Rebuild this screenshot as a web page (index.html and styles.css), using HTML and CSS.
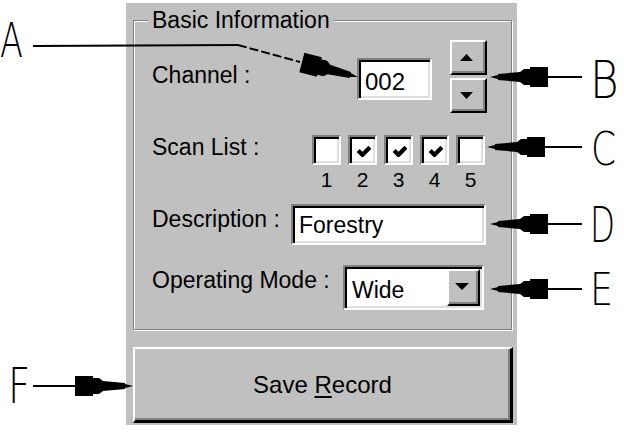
FILE: index.html
```html
<!DOCTYPE html>
<html lang="en">
<head>
    <meta charset="UTF-8">
    <title>Basic Information</title>
    <link rel="stylesheet" href="styles.css">
</head>
<body>
    <div class="page">
        <div class="dialog">
            <fieldset class="group">
                <legend>Basic Information</legend>

                <div class="row row-channel">
                    <span class="label label-channel">Channel :</span>
                    <div class="sunken field field-channel">002</div>
                    <div class="spin">
                        <div class="raised spin-btn">
                            <svg width="13" height="7" viewBox="0 0 13 7"><polygon points="0,7 6.5,0 13,7"/></svg>
                        </div>
                        <div class="raised spin-btn">
                            <svg width="13" height="7" viewBox="0 0 13 7"><polygon points="0,0 13,0 6.5,7"/></svg>
                        </div>
                    </div>
                </div>

                <div class="row row-scan">
                    <span class="label label-scan">Scan List :</span>
                    <div class="checks">
                        <div class="check-item"><span class="sunken checkbox"></span><span class="num">1</span></div>
                        <div class="check-item">
                            <span class="sunken checkbox">
                                <svg class="tick" viewBox="0 0 14 11"><polyline points="2,5 6,9 13,2"/></svg>
                            </span>
                            <span class="num">2</span>
                        </div>
                        <div class="check-item">
                            <span class="sunken checkbox">
                                <svg class="tick" viewBox="0 0 14 11"><polyline points="2,5 6,9 13,2"/></svg>
                            </span>
                            <span class="num">3</span>
                        </div>
                        <div class="check-item">
                            <span class="sunken checkbox">
                                <svg class="tick" viewBox="0 0 14 11"><polyline points="2,5 6,9 13,2"/></svg>
                            </span>
                            <span class="num">4</span>
                        </div>
                        <div class="check-item"><span class="sunken checkbox"></span><span class="num">5</span></div>
                    </div>
                </div>

                <div class="row row-desc">
                    <span class="label label-desc">Description :</span>
                    <div class="sunken field field-desc">Forestry</div>
                </div>

                <div class="row row-mode">
                    <span class="label label-mode">Operating Mode :</span>
                    <div class="sunken combo">
                        <span class="combo-text">Wide</span>
                        <div class="raised combo-btn">
                            <svg width="14" height="7" viewBox="0 0 14 7"><polygon points="0,0 14,0 7,7"/></svg>
                        </div>
                    </div>
                </div>
            </fieldset>

            <div class="raised save-btn">Save&nbsp;<u>R</u>ecord</div>
        </div>

        <!-- callout arrows and letters -->
        <svg class="callouts" width="624" height="435" viewBox="0 0 624 435">
            <defs>
                <path id="nib" d="M0 0 L8 -2 L8 -3 L30 -5 L34 -8 L40 -8 L40 -10 L58 -10 L58 10 L40 10 L40 8 L34 8 L30 5 L8 3 L8 2 Z"/>
            </defs>
            <g class="lines">
                <polyline points="33,46 238,45"/>
                <polyline class="dash" points="238,45 300,62"/>
                <line x1="548" y1="77" x2="582" y2="77"/>
                <line x1="545" y1="147" x2="582" y2="147"/>
                <line x1="548" y1="224" x2="582" y2="224"/>
                <line x1="548" y1="289" x2="582" y2="289"/>
                <line x1="33" y1="386" x2="75" y2="386"/>
            </g>
            <use href="#nib" transform="translate(358 77) rotate(194.5)"/>
            <use href="#nib" transform="translate(490 77)"/>
            <use href="#nib" transform="translate(487 147)"/>
            <use href="#nib" transform="translate(490 224)"/>
            <use href="#nib" transform="translate(490 289)"/>
            <use href="#nib" transform="translate(133 386) rotate(180)"/>

            <g class="letters">
                <text transform="translate(0 57) scale(0.7 1)" font-size="48">A</text>
                <text transform="translate(590 98) scale(0.84 1)" font-size="52">B</text>
                <text transform="translate(591 165) scale(0.78 1)" font-size="46">C</text>
                <text transform="translate(590 242) scale(0.65 1)" font-size="50">D</text>
                <text transform="translate(590 305) scale(0.81 1)" font-size="45">E</text>
                <text transform="translate(8 403) scale(0.77 1)" font-size="50">F</text>
            </g>
        </svg>
    </div>
</body>
</html>
```

FILE: styles.css
```css
* {
    box-sizing: border-box;
}

body {
    margin: 0;
    background: #fff;
    font-family: 'Liberation Sans', Arial, sans-serif;
    color: #000;
}

.page {
    position: relative;
    width: 624px;
    height: 435px;
    padding: 3px 0 0 126px;
    overflow: hidden;
}

.dialog {
    width: 391px;
    height: 422px;
    background: #c0c0c0;
    padding: 4px 4px 2px 7px;
    display: flex;
    flex-direction: column;
}

/* etched group frame */
.group {
    margin: 0;
    width: 379px;
    min-width: 0;
    border: 1px solid #808080;
    box-shadow: 1px 1px 0 #fff, inset 1px 1px 0 #fff;
    padding: 7px 0 19px 18px;
}

.group legend {
    margin-left: -4px;
    padding: 0 4px;
    font-size: 23px;
    line-height: 26px;
    background: #c0c0c0;
}

.row {
    display: flex;
    align-items: flex-start;
}

.label {
    font-size: 23px;
    line-height: 26px;
    white-space: nowrap;
}

/* 3d borders */
.sunken {
    background: #fff;
    border: 2px solid;
    border-color: #808080 #fff #fff #808080;
    box-shadow: inset 2px 2px 0 #000, inset -2px -2px 0 #dfdfdf;
}

.raised {
    background: #c0c0c0;
    border: 2px solid;
    border-color: #fff #000 #000 #fff;
    box-shadow: inset -2px -2px 0 #808080;
    display: flex;
    align-items: center;
    justify-content: center;
}

.field {
    display: flex;
    align-items: center;
    padding-left: 6px;
    font-size: 23px;
    line-height: 26px;
}

/* channel */
.row-channel {
    height: 73px;
}

.label-channel {
    width: 205px;
    margin-top: 22px;
}

.field-channel {
    width: 75px;
    height: 42px;
    margin-top: 18px;
    padding-top: 5px;
    font-size: 24px;
}

.spin {
    margin-left: 18px;
    display: flex;
    flex-direction: column;
    gap: 3px;
}

.spin-btn {
    width: 37px;
    height: 35px;
    padding-right: 4px;
}

/* scan list */
.row-scan {
    margin-top: 22px;
}

.label-scan {
    width: 160px;
    margin-top: -1px;
}

.checks {
    display: flex;
    gap: 7px;
}

.check-item {
    width: 29px;
    display: flex;
    flex-direction: column;
    align-items: center;
}

.checkbox {
    width: 29px;
    height: 30px;
    display: flex;
    align-items: center;
    justify-content: center;
    padding: 2px 0 0 2px;
}

.tick {
    width: 15px;
    height: 12px;
    fill: none;
    stroke: #000;
    stroke-width: 4;
}

.num {
    margin-top: 3px;
    font-size: 21px;
    line-height: 24px;
}

/* description */
.row-desc {
    margin-top: 12px;
}

.label-desc {
    width: 139px;
    margin-top: 2px;
}

.field-desc {
    width: 195px;
    height: 41px;
}

/* operating mode */
.row-mode {
    margin-top: 20px;
}

.label-mode {
    width: 191px;
    margin-top: 2px;
}

.combo {
    width: 141px;
    height: 45px;
    display: flex;
    padding: 2px;
}

.combo-text {
    flex: 1;
    padding: 5px 0 0 5px;
    font-size: 23px;
    line-height: 26px;
    display: flex;
    align-items: center;
}

.combo-btn {
    width: 33px;
    padding: 0 3px 2px 0;
}

/* save button */
.save-btn {
    margin-top: 17px;
    width: 380px;
    height: 76px;
    border-width: 2px 3px 3px 2px;
    font-size: 24px;
    line-height: 26px;
}

.save-btn u {
    text-underline-offset: 3px;
}

/* callouts overlay */
.callouts {
    position: absolute;
    left: 0;
    top: 0;
    pointer-events: none;
}

.callouts .lines {
    stroke: #000;
    stroke-width: 2;
    fill: none;
}

.callouts .dash {
    stroke-dasharray: 9 3;
}

.callouts use {
    fill: #000;
}

.callouts .letters {
    font-family: 'DejaVu Sans', sans-serif;
    font-weight: 200;
    fill: #000;
}
```
